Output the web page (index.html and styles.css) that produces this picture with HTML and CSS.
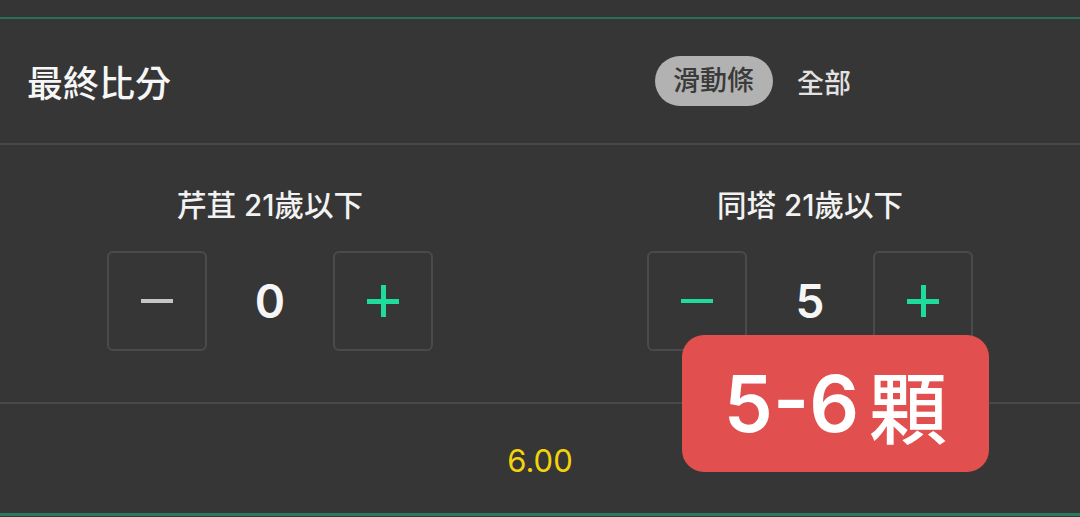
FILE: index.html
```html
<!DOCTYPE html>
<html lang="zh-Hant">
<head>
    <meta charset="UTF-8">
    <title>最終比分</title>
    <link rel="stylesheet" href="styles.css">
</head>
<body>
    <div class="top-strip"></div>

    <div class="market">
        <div class="market-header">
            <h1 class="market-title">最終比分</h1>
            <div class="tabs">
                <span class="tab active">滑動條</span>
                <span class="tab">全部</span>
            </div>
        </div>

        <div class="teams">
            <div class="team">
                <div class="team-name">芹苴 21歲以下</div>
                <div class="stepper">
                    <div class="step-btn minus disabled"></div>
                    <div class="score">0</div>
                    <div class="step-btn plus"></div>
                </div>
            </div>
            <div class="team">
                <div class="team-name">同塔 21歲以下</div>
                <div class="stepper">
                    <div class="step-btn minus"></div>
                    <div class="score">5</div>
                    <div class="step-btn plus"></div>
                </div>
            </div>
        </div>

        <div class="odds-row">
            <span class="odds">6.00</span>
        </div>
    </div>

    <div class="badge">5-6<span class="badge-unit">顆</span></div>
</body>
</html>
```

FILE: styles.css
```css
body {
    margin: 0;
    background-color: #363636;
    color: #f4f4f4;
    font-family: "Inter", "Noto Sans CJK TC", sans-serif;
    width: 1080px;
    height: 517px;
    overflow: hidden;
    position: relative;
}

.top-strip {
    height: 17px;
    background-color: #353535;
    border-bottom: 2px solid #2b6e5a;
}

.market {
    border-bottom: 3px solid #2a7a62;
}

.market-header {
    height: 124px;
    display: grid;
    grid-template-columns: 1fr 1fr;
    align-items: center;
    border-bottom: 2px solid #484848;
}

.market-title {
    margin: 0 0 0 27px;
    font-size: 36px;
    font-weight: 500;
    color: #f6f6f6;
}

.tabs {
    display: flex;
    align-items: center;
    gap: 24px;
    padding-left: 115px;
}

.tab {
    font-size: 27px;
    font-weight: 500;
    color: #e2e2e2;
}

.tab.active {
    background-color: #b2b2b2;
    color: #3a3a3a;
    border-radius: 25px;
    height: 50px;
    line-height: 50px;
    padding: 0 19px 0 18px;
}

.teams {
    height: 257px;
    display: grid;
    grid-template-columns: 1fr 1fr;
    border-bottom: 2px solid #484848;
}

.team {
    display: flex;
    flex-direction: column;
    align-items: center;
    padding-top: 43px;
}

.team-name {
    font-size: 29.5px;
    line-height: 34px;
    font-weight: 500;
    color: #f2f2f2;
}

.stepper {
    margin-top: 29px;
    display: flex;
    align-items: center;
}

.step-btn {
    width: 96px;
    height: 96px;
    border: 2px solid #4a4a4a;
    border-radius: 6px;
    position: relative;
}

/* minus / plus bars */
.step-btn::before,
.step-btn.plus::after {
    content: "";
    position: absolute;
    left: 50%;
    top: 50%;
    width: 32px;
    height: 4px;
    margin: -2px 0 0 -16px;
    background-color: #20dc9c;
}

.step-btn.plus::after {
    width: 5px;
    height: 32px;
    margin: -16px 0 0 -2.5px;
}

.step-btn.plus::before {
    height: 5px;
    margin-top: -2.5px;
}

.step-btn.disabled::before {
    background-color: #c6c6c6;
}

.score {
    width: 126px;
    text-align: center;
    font-size: 46px;
    font-weight: 600;
    color: #f6f6f6;
}

.odds-row {
    height: 109px;
    display: flex;
    align-items: center;
    justify-content: center;
}

.odds {
    font-size: 31px;
    font-weight: 400;
    color: #f2d30c;
    padding-top: 3px;
}

.badge {
    position: absolute;
    left: 682px;
    top: 335px;
    width: 307px;
    height: 137px;
    border-radius: 22px;
    background-color: #e24f4f;
    color: #ffffff;
    font-size: 78px;
    font-weight: 600;
    display: flex;
    align-items: center;
    justify-content: center;
}

.badge-unit {
    margin-left: 10px;
    font-weight: 500;
}
```
